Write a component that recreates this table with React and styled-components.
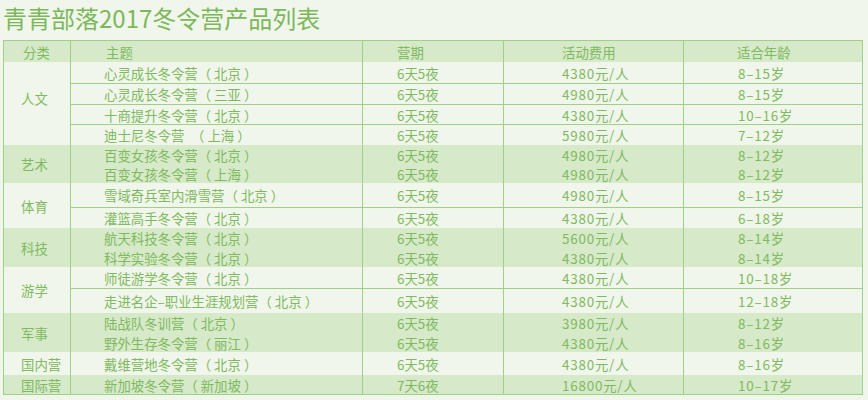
import styled, { createGlobalStyle } from "styled-components";

const GREEN = "#7fba5e";
const LINE = "#a0cf86";
const LIGHT = "#f0f6eb";
const DARK = "#d6e9c9";

const Global = createGlobalStyle`
  html, body {
    margin: 0;
    padding: 0;
    background: ${LIGHT};
  }
  body {
    font-family: "Noto Sans CJK SC", "Noto Sans", sans-serif;
    color: ${GREEN};
  }
`;

const Page = styled.div`
  width: 868px;
  height: 400px;
  padding-left: 3px;
  box-sizing: border-box;
  overflow: hidden;
`;

const Title = styled.h1`
  margin: 0;
  padding-top: 4px;
  font-size: 24px;
  line-height: 28px;
  font-weight: 400;
  color: #7cb85a;
`;

const Table = styled.div`
  margin-top: 8px;
  width: 860px;
  box-sizing: border-box;
  border: 1px solid ${LINE};
  display: grid;
  grid-template-columns: 66px 292px 141px 180px 179px;
  grid-template-rows: ${(p) => p.$rows};
  font-size: 13.4px;
  line-height: 16px;
`;

const Cell = styled.div`
  box-sizing: border-box;
  display: flex;
  align-items: center;
  white-space: pre;
  padding-left: ${(p) => p.$pl}px;
  background: ${(p) => (p.$dark ? DARK : LIGHT)};
  border-left: ${(p) => (p.$first ? "none" : `1px solid ${LINE}`)};
  border-top: ${(p) => (p.$line ? `1px solid ${LINE}` : "none")};
`;

const Category = styled(Cell)`
  grid-column: 1;
  grid-row: span ${(p) => p.$span};
  padding-bottom: ${(p) => p.$lift || 0}px;
`;

const Num = styled.span`
  letter-spacing: 0.8px;
`;

const HEAD = [
  ["分类", 19],
  ["主题", 35],
  ["营期", 34],
  ["活动费用", 58],
  ["适合年龄", 53],
];

const PADS = [33, 34, 58, 54];

const groups = [
  {
    name: "人文",
    lift: 12,
    rows: [
      ["心灵成长冬令营（ 北京 ）", "6天5夜", "4380元/人", "8–15岁", 21],
      ["心灵成长冬令营（ 三亚 ）", "6天5夜", "4980元/人", "8–15岁", 21],
      ["十商提升冬令营（ 北京 ）", "6天5夜", "4380元/人", "10–16岁", 20],
      ["迪士尼冬令营\u3000（ 上海 ）", "6天5夜", "5980元/人", "7–12岁", 21],
    ],
  },
  {
    name: "艺术",
    rows: [
      ["百变女孩冬令营（ 北京 ）", "6天5夜", "4980元/人", "8–12岁", 19],
      ["百变女孩冬令营（ 上海 ）", "6天5夜", "4980元/人", "8–12岁", 19],
    ],
  },
  {
    name: "体育",
    rows: [
      ["雪域奇兵室内滑雪营（ 北京 ）", "6天5夜", "4980元/人", "8–15岁", 24],
      ["灌篮高手冬令营（ 北京 ）", "6天5夜", "4380元/人", "6–18岁", 21],
    ],
  },
  {
    name: "科技",
    rows: [
      ["航天科技冬令营（ 北京 ）", "6天5夜", "5600元/人", "8–14岁", 20],
      ["科学实验冬令营（ 北京 ）", "6天5夜", "4380元/人", "8–14岁", 19],
    ],
  },
  {
    name: "游学",
    rows: [
      ["师徒游学冬令营（ 北京 ）", "6天5夜", "4380元/人", "10–18岁", 21],
      ["走进名企–职业生涯规划营（ 北京 ）", "6天5夜", "4380元/人", "12–18岁", 25],
    ],
  },
  {
    name: "军事",
    rows: [
      ["陆战队冬训营（ 北京 ）", "6天5夜", "3980元/人", "8–12岁", 20],
      ["野外生存冬令营（ 丽江 ）", "6天5夜", "4380元/人", "8–16岁", 19],
    ],
  },
  {
    name: "国内营",
    rows: [["戴维营地冬令营（ 北京 ）", "6天5夜", "4380元/人", "8–16岁", 23]],
  },
  {
    name: "国际营",
    rows: [["新加坡冬令营（ 新加坡 ）", "7天6夜", "16800元/人", "10–17岁", 19]],
  },
];

export default function App() {
  const heights = [21];
  groups.forEach((g) => g.rows.forEach((r) => heights.push(r[4])));
  const rows = heights.map((h) => `${h}px`).join(" ");

  return (
    <Page>
      <Global />
      <Title>青青部落2017冬令营产品列表</Title>
      <Table $rows={rows}>
        {HEAD.map(([text, pl], i) => (
          <Cell key={text} $dark $first={i === 0} $pl={pl}>
            {text}
          </Cell>
        ))}
        {groups.map((g, gi) => {
          const dark = gi % 2 === 1;
          return [
            <Category
              key={g.name}
              $span={g.rows.length}
              $dark={dark}
              $first
              $pl={17}
              $lift={g.lift}
            >
              {g.name}
            </Category>,
            ...g.rows.map((r, ri) =>
              r.slice(0, 4).map((text, ci) => (
                <Cell
                  key={`${g.name}-${ri}-${ci}`}
                  $dark={dark}
                  $line={!dark && ri > 0}
                  $pl={PADS[ci]}
                >
                  {ci >= 2 ? <Num>{text}</Num> : text}
                </Cell>
              ))
            ),
          ];
        })}
      </Table>
    </Page>
  );
}
